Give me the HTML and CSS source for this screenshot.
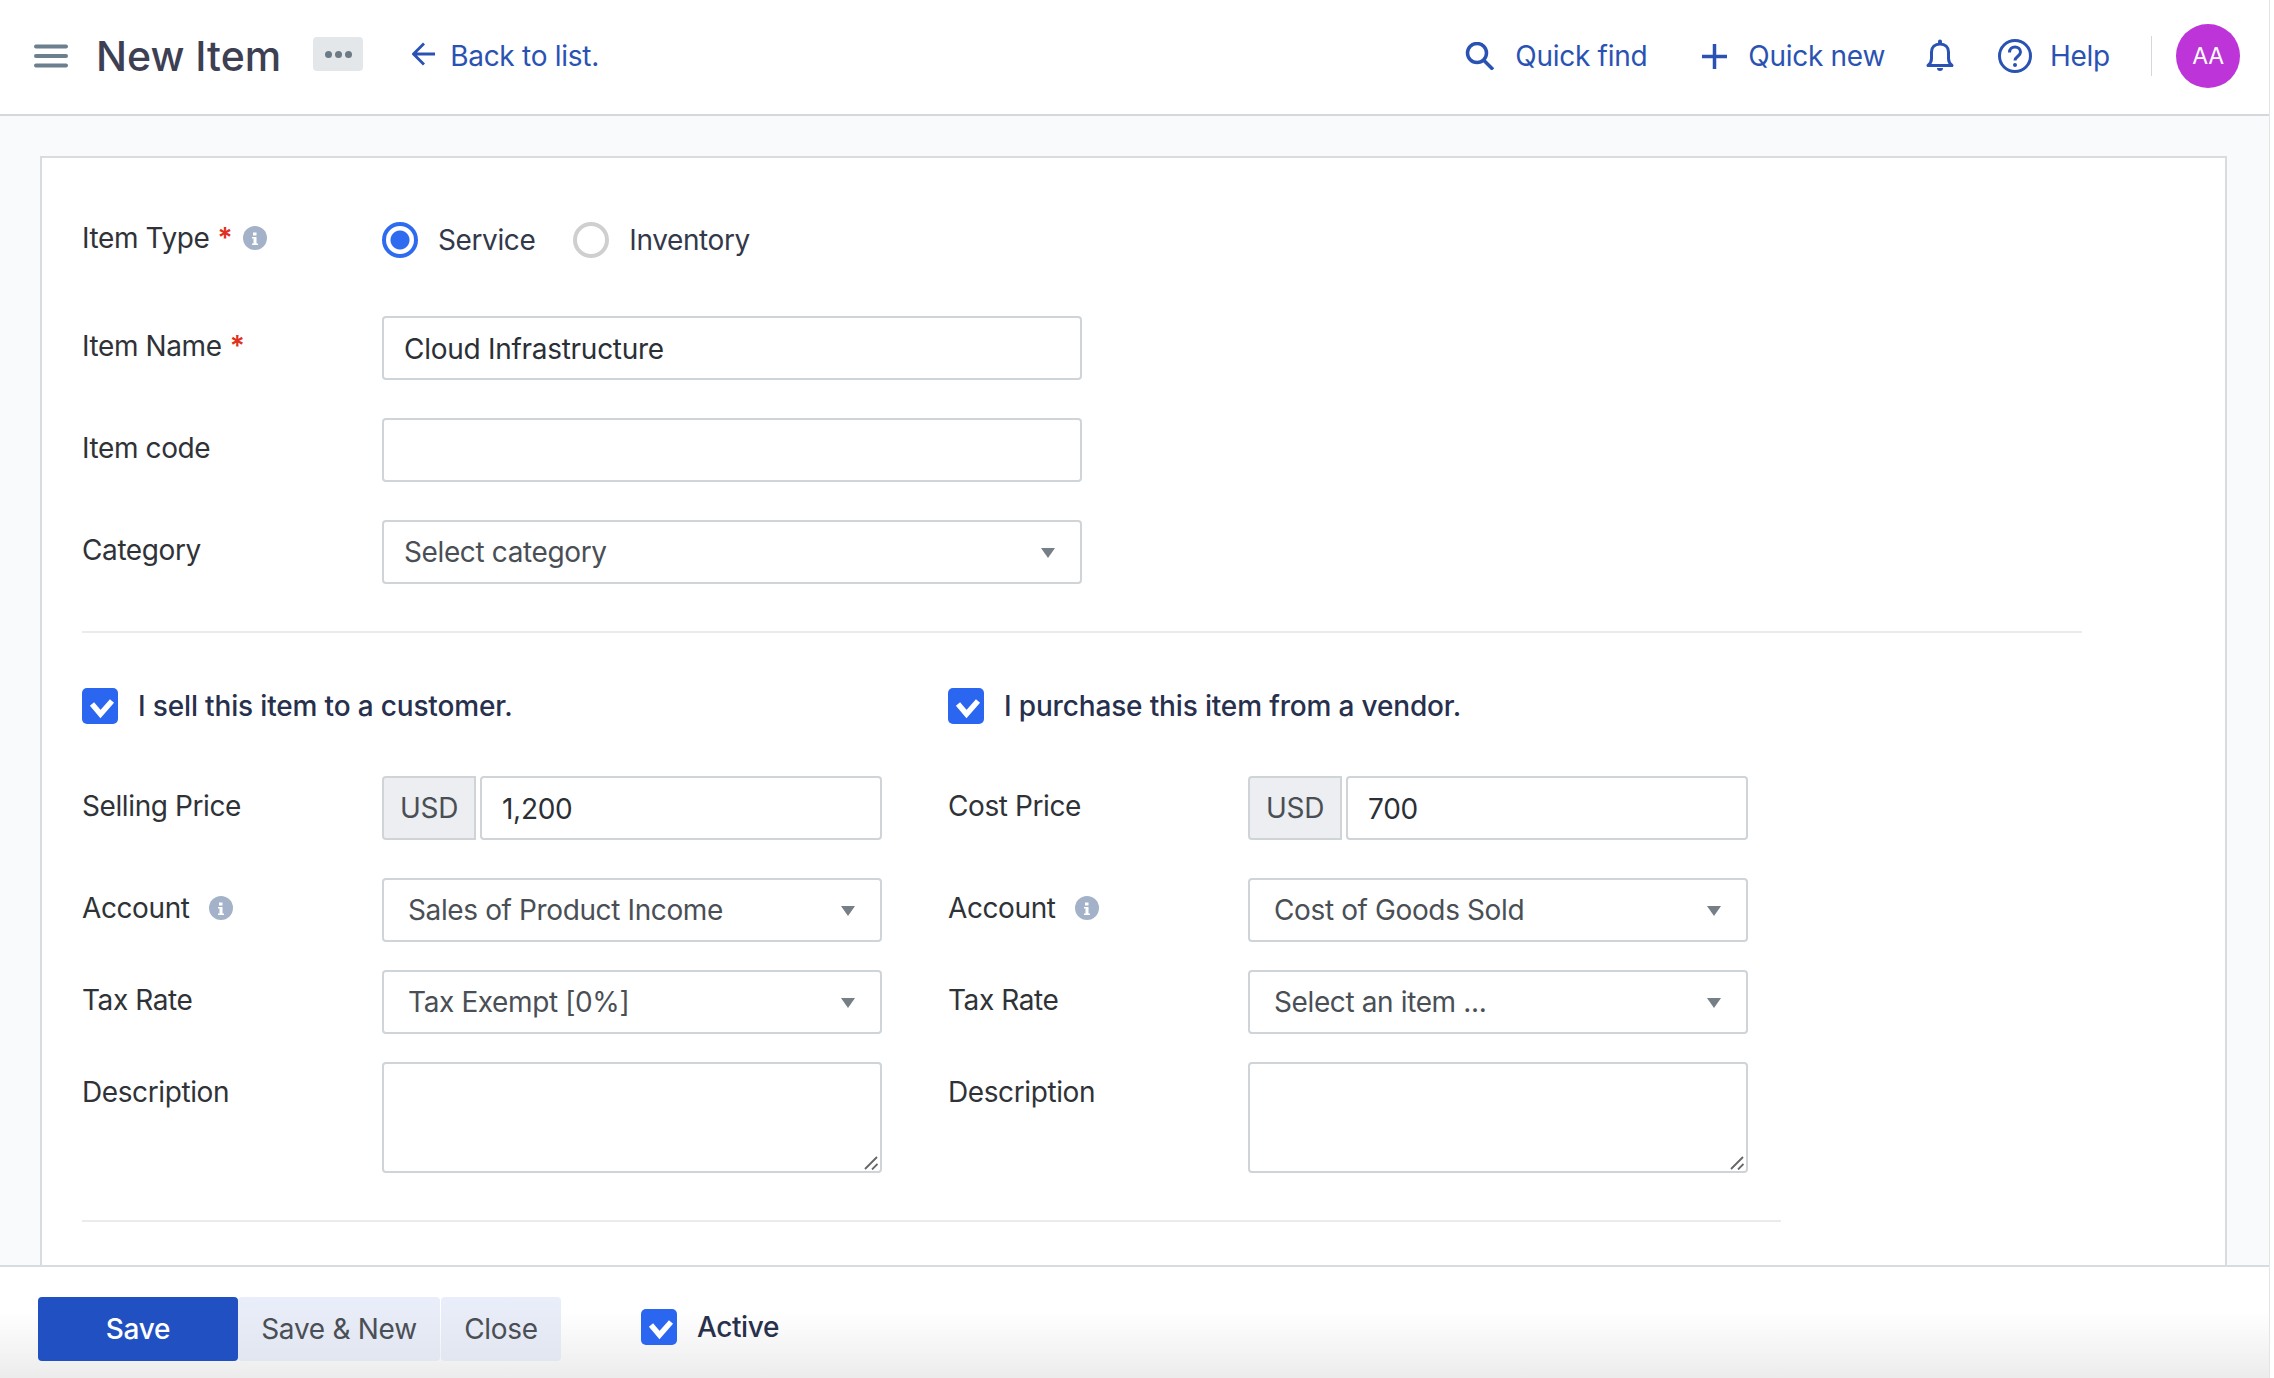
FILE: index.html
```html
<!DOCTYPE html>
<html>
<head>
    <title>New Item</title>
    <meta name="viewport" content="width=device-width, initial-scale=1">
    <link rel="stylesheet" href="styles.css">
</head>
<body>
    <div class="app">
        <header class="topbar">
            <div class="topbar-left">
                <svg class="menu-icon" viewBox="0 0 34 24"><path d="M2 2.500h30M2 12h30M2 21.500h30"/></svg>
                <h1 class="page-title">New Item</h1>
                <button type="button" class="more-btn"><i></i><i></i><i></i></button>
                <a class="top-link back-link" href="#">
                    <svg class="back-icon" viewBox="0 0 24 24"><path d="M23 12H2M12 1.500 1.500 12 12 22.500"/></svg>
                    Back to list.
                </a>
            </div>
            <nav class="topbar-right">
                <a class="top-link find-link" href="#">
                    <svg class="search-icon" viewBox="0 0 30 28"><circle cx="12" cy="11" r="9.500"/><path d="m18.500 18 9.500 9.500"/></svg>
                    Quick find
                </a>
                <a class="top-link new-link" href="#">
                    <svg class="plus-icon" viewBox="0 0 25 25"><path d="M12.500 0v25M0 12.500h25"/></svg>
                    Quick new
                </a>
                <svg class="bell-icon" viewBox="0 0 30 34"><path d="M3 26.500c2.500-2 3.500-3.500 3.500-7V13C6.500 8 10 5 15 5s8.500 3 8.500 8v6.500c0 3.500 1 5 3.500 7z"/><path class="bell-fill" d="M13 2.500a2 2 0 0 1 4 0V5h-4zM12 29h6a3 3 0 0 1-6 0z"/></svg>
                <a class="top-link help-link" href="#">
                    <svg class="help-icon" viewBox="0 0 34 34"><circle cx="17" cy="17" r="15.500"/><path d="M11.500 13.500c0-3.500 2.500-5.500 5.500-5.500s5.500 2 5.500 5c0 4.500-5.500 4.500-5.500 8.500"/><circle class="help-dot" cx="17" cy="26" r="2"/></svg>
                    Help
                </a>
                <span class="top-divider"></span>
                <span class="avatar">AA</span>
            </nav>
        </header>

        <main class="content">
            <form class="card">
                <div class="form-row type-row">
                    <div class="form-label">Item Type <span class="req">*</span>
                        <svg class="info-icon" viewBox="0 0 24 24"><circle cx="12" cy="12" r="12"/><path d="M10 6.500h3.500v3H10zM9 11h4.500v6.500H15V19H9v-1.500h1.500V12.500H9z"/></svg>
                    </div>
                    <div class="radio-group">
                        <label class="radio-item"><span class="radio checked"></span>Service</label>
                        <label class="radio-item"><span class="radio"></span>Inventory</label>
                    </div>
                </div>

                <div class="form-row wide">
                    <label class="form-label">Item Name <span class="req">*</span></label>
                    <input class="field" type="text" value="Cloud Infrastructure">
                </div>
                <div class="form-row wide">
                    <label class="form-label">Item code</label>
                    <input class="field" type="text">
                </div>
                <div class="form-row wide last">
                    <label class="form-label">Category</label>
                    <div class="select category">Select category<span class="caret"></span></div>
                </div>

                <hr class="rule rule-top">

                <div class="columns">
                    <section class="column">
                        <label class="check-line">
                            <span class="checkbox"><svg viewBox="0 0 36 36"><path d="m10 16 8.500 10L30 13"/></svg></span>
                            I sell this item to a customer.
                        </label>
                        <div class="form-row price-row">
                            <label class="form-label">Selling Price</label>
                            <div class="money"><span class="addon">USD</span><input class="field" type="text" value="1,200"></div>
                        </div>
                        <div class="form-row">
                            <label class="form-label">Account
                                <svg class="info-icon" viewBox="0 0 24 24"><circle cx="12" cy="12" r="12"/><path d="M10 6.500h3.500v3H10zM9 11h4.500v6.500H15V19H9v-1.500h1.500V12.500H9z"/></svg>
                            </label>
                            <div class="select">Sales of Product Income<span class="caret"></span></div>
                        </div>
                        <div class="form-row">
                            <label class="form-label">Tax Rate</label>
                            <div class="select">Tax Exempt [0%]<span class="caret"></span></div>
                        </div>
                        <div class="form-row last">
                            <label class="form-label">Description</label>
                            <div class="notes-wrap">
                                <textarea class="field notes"></textarea>
                                <svg class="grip" viewBox="0 0 14 14"><path d="M13 1 1 13M13.500 8l-5.500 5.500"/></svg>
                            </div>
                        </div>
                    </section>

                    <section class="column">
                        <label class="check-line">
                            <span class="checkbox"><svg viewBox="0 0 36 36"><path d="m10 16 8.500 10L30 13"/></svg></span>
                            I purchase this item from a vendor.
                        </label>
                        <div class="form-row price-row">
                            <label class="form-label">Cost Price</label>
                            <div class="money"><span class="addon">USD</span><input class="field" type="text" value="700"></div>
                        </div>
                        <div class="form-row">
                            <label class="form-label">Account
                                <svg class="info-icon" viewBox="0 0 24 24"><circle cx="12" cy="12" r="12"/><path d="M10 6.500h3.500v3H10zM9 11h4.500v6.500H15V19H9v-1.500h1.500V12.500H9z"/></svg>
                            </label>
                            <div class="select">Cost of Goods Sold<span class="caret"></span></div>
                        </div>
                        <div class="form-row">
                            <label class="form-label">Tax Rate</label>
                            <div class="select">Select an item ...<span class="caret"></span></div>
                        </div>
                        <div class="form-row last">
                            <label class="form-label">Description</label>
                            <div class="notes-wrap">
                                <textarea class="field notes"></textarea>
                                <svg class="grip" viewBox="0 0 14 14"><path d="M13 1 1 13M13.500 8l-5.500 5.500"/></svg>
                            </div>
                        </div>
                    </section>
                </div>

                <hr class="rule rule-bottom">
            </form>
        </main>

        <footer class="actions">
            <div class="btn-group">
                <button type="button" class="btn btn-primary">Save</button>
                <button type="button" class="btn btn-light save-new">Save &amp; New</button>
                <button type="button" class="btn btn-light close">Close</button>
            </div>
            <label class="check-line active-check">
                <span class="checkbox"><svg viewBox="0 0 36 36"><path d="m10 16 8.500 10L30 13"/></svg></span>
                Active
            </label>
        </footer>
    </div>
</body>
</html>
```

FILE: styles.css
```css
* {
    box-sizing: border-box;
}
html, body {
    height: 100%;
}
body {
    margin: 0;
    background: white;
    font-family: Inter, "Liberation Sans", sans-serif;
    font-size: 28px;
    letter-spacing: -0.28px;
    color: #2b2f36;
    overflow: hidden;
}
.app {
    width: 2270px;
    height: 100vh;
    display: flex;
    flex-direction: column;
    border-right: 1px solid #e2e5e8;
}

/* top bar */
.topbar {
    height: 116px;
    flex: none;
    display: flex;
    align-items: center;
    justify-content: space-between;
    background: white;
    border-bottom: 2px solid #d3d8dc;
    padding: 0 29px 2px 34px;
}
.topbar-left, .topbar-right {
    display: flex;
    align-items: center;
}
.menu-icon {
    width: 34px;
    height: 24px;
    fill: none;
    stroke: #6c7f8e;
    stroke-width: 4;
    stroke-linecap: round;
}
.page-title {
    margin: 0 0 0 28px;
    font-size: 41px;
    font-weight: 500;
    color: #3d4053;
    letter-spacing: 0;
}
.more-btn {
    width: 50px;
    height: 34px;
    margin: -4px 0 0 32px;
    padding: 0;
    border: none;
    border-radius: 4px;
    background: #e4e7ea;
    display: flex;
    align-items: center;
    justify-content: center;
    gap: 3px;
}
.more-btn i {
    width: 7px;
    height: 7px;
    border-radius: 50%;
    background: #6c7a86;
}
.top-link {
    display: flex;
    align-items: center;
    color: #2a52b3;
    text-decoration: none;
}
.back-link {
    margin-left: 49px;
    gap: 14px;
}
.back-icon {
    width: 24px;
    height: 24px;
    margin-top: -4px;
    fill: none;
    stroke: #2a52b3;
    stroke-width: 2.800;
}
.search-icon {
    width: 30px;
    height: 28px;
    fill: none;
    stroke: #2a52b3;
    stroke-width: 3.500;
}
.find-link {
    gap: 20px;
}
.new-link {
    margin-left: 55px;
    gap: 21px;
}
.plus-icon {
    width: 25px;
    height: 25px;
    fill: none;
    stroke: #2a52b3;
    stroke-width: 3.500;
}
.bell-icon {
    width: 30px;
    height: 34px;
    margin-left: 40px;
    fill: none;
    stroke: #2a52b3;
    stroke-width: 3;
    stroke-linejoin: round;
}
.bell-fill {
    fill: #2a52b3;
    stroke: none;
}
.help-link {
    margin-left: 43px;
    gap: 18px;
}
.help-icon {
    width: 34px;
    height: 34px;
    fill: none;
    stroke: #2a52b3;
    stroke-width: 3;
}
.help-dot {
    fill: #2a52b3;
    stroke: none;
}
.top-divider {
    width: 1px;
    height: 40px;
    margin-left: 41px;
    background: #d3d8dc;
}
.avatar {
    width: 64px;
    height: 64px;
    margin-left: 24px;
    border-radius: 50%;
    background: #bd34d8;
    color: white;
    font-size: 23px;
    display: flex;
    align-items: center;
    justify-content: center;
}

/* form card */
.content {
    flex: 1;
    min-height: 0;
    overflow: hidden;
    background: #f9fafb;
    padding: 40px 42px 0 40px;
}
.card {
    min-height: 100%;
    background: white;
    border: 2px solid #d8dcdf;
    border-width: 2px 2px 0 2px;
    padding: 64px 40px 0 40px;
}
.form-row {
    display: grid;
    grid-template-columns: 300px 500px;
    align-items: start;
    margin-bottom: 28px;
}
.form-row.wide {
    grid-template-columns: 300px 700px;
    margin-bottom: 38px;
}
.form-row.price-row {
    margin-bottom: 38px;
}
.form-row.last {
    margin-bottom: 0;
}
.form-row.type-row {
    margin-bottom: 58px;
    align-items: center;
}
.form-label {
    display: flex;
    align-items: center;
    gap: 8px;
    min-height: 60px;
    letter-spacing: -0.4px;
    color: #2f3338;
}
.type-row .form-label {
    min-height: 0;
    margin-top: -4px;
}
.req {
    color: #e0301e;
    font-weight: 600;
}
.info-icon {
    width: 24px;
    height: 24px;
    margin-left: 3px;
    fill: #a3b2c8;
}
.info-icon path {
    fill: white;
}
.column .info-icon {
    margin-left: 11px;
}
.radio-group {
    display: flex;
    gap: 38px;
}
.radio-item {
    display: flex;
    align-items: center;
    gap: 20px;
    letter-spacing: -0.4px;
    color: #33384a;
}
.radio {
    width: 36px;
    height: 36px;
    border-radius: 50%;
    border: 4px solid #cfcfcf;
    background: white;
}
.radio.checked {
    border-color: #2f6bf0;
    background: radial-gradient(circle, #2f6bf0 0 9px, white 10px);
}
.field {
    width: 100%;
    height: 64px;
    padding: 2px 20px 0;
    border: 2px solid #cfd4d8;
    border-radius: 4px;
    background: white;
    font: inherit;
    letter-spacing: inherit;
    color: #2b2f36;
    outline: none;
}
.select {
    position: relative;
    height: 64px;
    display: flex;
    align-items: center;
    padding: 0 24px;
    border: 2px solid #cfd4d8;
    border-radius: 4px;
    background: white;
    letter-spacing: -0.38px;
    color: #4a4f55;
}
.select.category {
    padding-left: 20px;
}
.caret {
    position: absolute;
    right: 25px;
    top: 26px;
    border-left: 7.500px solid transparent;
    border-right: 7.500px solid transparent;
    border-top: 10px solid #767e86;
}
.rule {
    height: 2px;
    margin: 0;
    border: none;
    background: #e9ebed;
}
.rule-top {
    width: 2000px;
    margin-top: 47px;
}
.rule-bottom {
    width: 1699px;
    margin-top: 47px;
}

/* sell and purchase columns */
.columns {
    display: flex;
    gap: 66px;
    margin-top: 55px;
}
.column {
    width: 800px;
}
.check-line {
    display: flex;
    align-items: center;
    gap: 20px;
    height: 36px;
    margin-bottom: 52px;
    font-weight: 500;
    letter-spacing: -0.16px;
    color: #27304d;
}
.checkbox {
    width: 36px;
    height: 36px;
    border-radius: 5px;
    background: #2a66f0;
    flex: none;
}
.checkbox svg {
    display: block;
    fill: none;
    stroke: white;
    stroke-width: 5.500;
}
.money {
    display: flex;
    gap: 4px;
}
.addon {
    width: 94px;
    height: 64px;
    flex: none;
    display: flex;
    align-items: center;
    justify-content: center;
    background: #eceef1;
    border: 2px solid #cfd4d8;
    border-radius: 4px 0 0 4px;
    color: #4a4f55;
}
.notes-wrap {
    position: relative;
}
.notes {
    display: block;
    height: 111px;
    resize: none;
}
.grip {
    position: absolute;
    right: 4px;
    bottom: 3px;
    width: 14px;
    height: 14px;
    fill: none;
    stroke: #666;
    stroke-width: 1.800;
}

/* bottom actions */
.actions {
    height: 113px;
    flex: none;
    display: flex;
    align-items: flex-start;
    padding: 30px 0 0 38px;
    border-top: 2px solid #d8dcdf;
    background: linear-gradient(to bottom, white 40%, #ececec 100%);
}
.btn-group {
    display: flex;
    gap: 1px;
}
.btn {
    height: 64px;
    padding: 0;
    border: none;
    border-radius: 4px;
    font: inherit;
    letter-spacing: inherit;
    cursor: pointer;
}
.btn-primary {
    width: 200px;
    background: #2150c2;
    color: white;
    font-weight: 500;
}
.btn-light {
    background: linear-gradient(to bottom, #e9eefa, #e1e6f0);
    color: #4a4f55;
}
.save-new {
    width: 202px;
    margin-left: -1px;
}
.close {
    width: 120px;
}
.active-check {
    margin: 12px 0 0 80px;
    letter-spacing: -0.4px;
}
```
